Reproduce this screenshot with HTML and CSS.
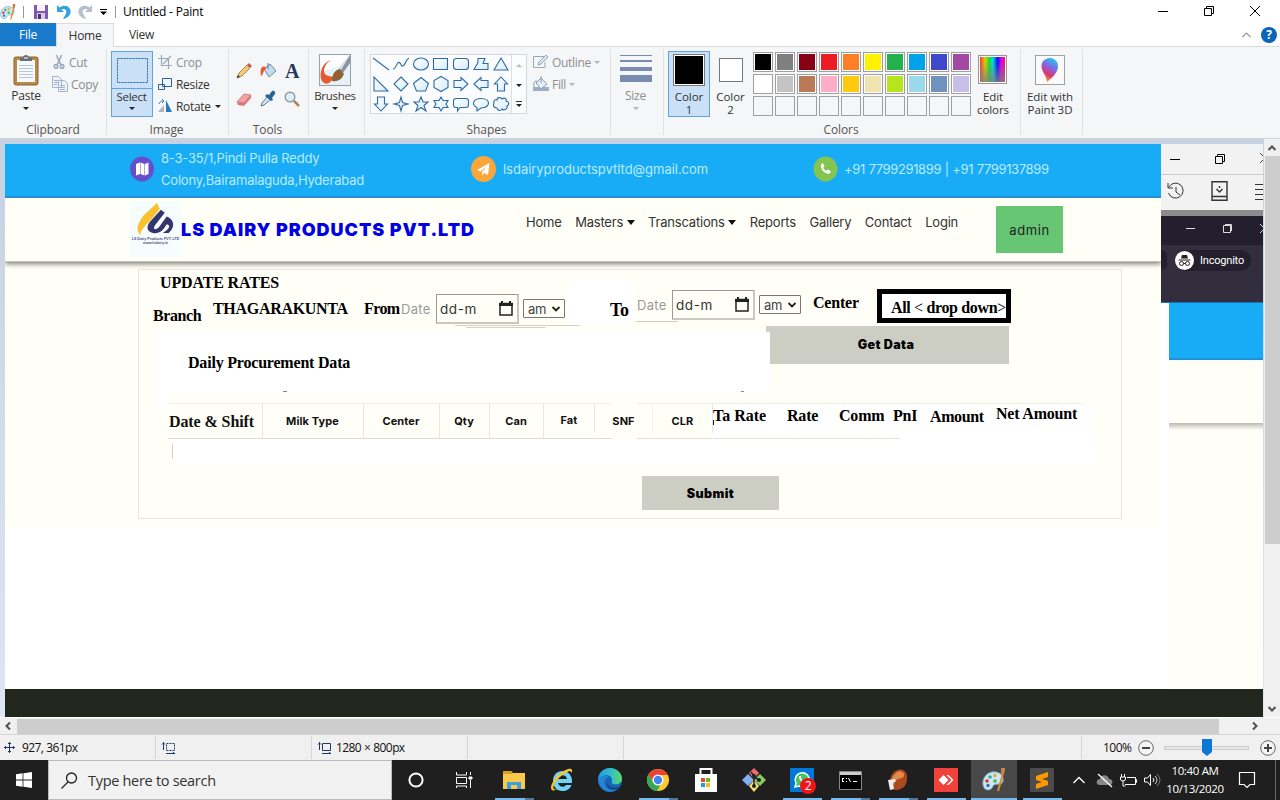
FILE: index.html
```html
<!DOCTYPE html>
<html lang="en">
<head>
<meta charset="utf-8">
<title>Untitled - Paint</title>
<link rel="stylesheet" href="styles.css">
</head>
<body>
<svg width="0" height="0" class="defs">
  <defs>
    <linearGradient id="sky" x1="0" y1="0" x2="1" y2="1"><stop offset="0" stop-color="#fff"/><stop offset="1" stop-color="#d5ecfa"/></linearGradient>
    <linearGradient id="rainbow"><stop offset="0" stop-color="#f33"/><stop offset=".2" stop-color="#dc0"/><stop offset=".38" stop-color="#1d3"/><stop offset=".52" stop-color="#0dd"/><stop offset=".7" stop-color="#11f"/><stop offset=".87" stop-color="#e0e"/><stop offset="1" stop-color="#f14"/></linearGradient>
    <linearGradient id="fade" x1="0" y1="0" x2="0" y2="1"><stop offset=".2" stop-color="#808080" stop-opacity="0"/><stop offset="1" stop-color="#808080" stop-opacity=".8"/></linearGradient>
    <linearGradient id="pin" x1=".7" y1="0" x2=".3" y2="1"><stop offset="0" stop-color="#1dc8ee"/><stop offset=".4" stop-color="#8a62e4"/><stop offset=".7" stop-color="#e0366e"/><stop offset="1" stop-color="#f7a51c"/></linearGradient>
    <linearGradient id="edge" x1="0" y1="0" x2="1" y2="0"><stop offset="0" stop-color="#1d9fe0"/><stop offset=".6" stop-color="#35c1c4"/><stop offset="1" stop-color="#5ddb55"/></linearGradient>
    <symbol id="palette" viewBox="0 0 24 24">
      <path d="M10 4C4 5 0 11 1 17c1 5 5 6 8 4 2-1 1-3 3-4 3-2 8 1 9-4C22 7 17 3 10 4z" fill="#cde7f4" stroke="#7aa7c0"/>
      <circle cx="5" cy="13" r="1.8" fill="#d33"/><circle cx="8" cy="9" r="1.8" fill="#3a9"/><circle cx="13" cy="7.500" r="1.800" fill="#ea3"/><circle cx="6" cy="17.500" r="1.700" fill="#36c"/><circle cx="13" cy="13" r="1.800" fill="#4b4"/>
      <path d="M22 1l-2 8-4 14" stroke="#dd8a35" stroke-width="2" fill="none"/><path d="M19 0h4l-1 6h-3z" fill="#c98247"/>
    </symbol>
  </defs>
</svg>

<header class="titlebar">
  <svg class="app-icon" width="16" height="16"><use href="#palette"/></svg>
  <i class="bar"></i>
  <svg class="q-save" width="14" height="14" viewBox="0 0 14 14"><path d="M0 0h14v14H0z" fill="#8059ad"/><path d="M3 0h8v6H3z" fill="#f6f2fb"/><path d="M3 8h8v6H3z" fill="#d9c8ea"/><path d="M4 9h3v5H4z" fill="#4a3575"/></svg>
  <svg class="q-undo" width="14" height="14" viewBox="0 0 14 14"><path d="M0 0v7h7L4.500 4.500C8 3 11 6 8.500 9.500L6 14c6-1 9-6 7-10-2-4-7-4-10.500-1.500z" fill="#32a3dd"/></svg>
  <svg class="q-redo" width="14" height="14" viewBox="0 0 14 14"><path d="M14 0v7H7l2.500-2.500C6 3 3 6 5.500 9.500L8 14C2 13-1 8 1 4c2-4 7-4 10.500-1.500z" fill="#b8bfca"/></svg>
  <svg class="q-more" width="7" height="6" viewBox="0 0 7 6"><path d="M0 0h7v1H0zM0 2.500h7L3.500 6z"/></svg>
  <i class="bar bar2"></i>
  <span class="title">Untitled - Paint</span>
  <div class="win-buttons">
    <svg width="10" height="12" viewBox="0 0 10 12"><path d="M0 6.500h10" stroke="#000"/></svg>
    <svg width="10" height="12" viewBox="0 0 10 12" fill="none" stroke="#000"><path d="M.5 3.500h7v7h-7zM2.500 3.500v-2h7v7h-2"/></svg>
    <svg width="10" height="12" viewBox="0 0 10 12" stroke="#000"><path d="M0 1l10 10M10 1L0 11"/></svg>
  </div>
</header>

<nav class="tabs">
  <span class="tab file">File</span><span class="tab home">Home</span><span class="tab view">View</span>
  <svg class="collapse" width="9" height="6" viewBox="0 0 9 6"><path d="M.5 5l4-4 4 4" fill="none" stroke="#9a9a9a" stroke-width="1.200"/></svg>
  <span class="help">?</span>
</nav>

<section class="ribbon">
  <div class="group g-clip">
    <div class="content">
      <div class="big paste"><div class="pic"><svg width="26" height="32" viewBox="0 0 26 32"><rect x="1" y="3" width="24" height="28" rx="2" fill="#b98947" stroke="#8c6430"/><path d="M4 6h18v22H4z" fill="#f7fafd"/><path d="M6 11.500h14M6 14.500h14M6 17.500h14M6 20.500h14M6 23.500h14" stroke="#b4c7dc"/><path d="M7 7V4h3c0-4 6-4 6 0h3v3z" fill="#666e77"/><path d="M11 4h4" stroke="#fff"/></svg></div><span>Paste</span><i class="dn"></i></div>
      <div class="minis">
        <div class="mini off"><svg width="14" height="16" viewBox="0 0 16 18" fill="none" stroke="#9ba9bd" stroke-width="1.800"><path d="M5 1l5 11M11 1L6 12"/><circle cx="4.500" cy="14" r="2"/><circle cx="11.500" cy="14" r="2"/></svg><span>Cut</span></div>
        <div class="mini off"><svg width="16" height="16" viewBox="0 0 16 16" fill="#eef2f8" stroke="#a4b4cc"><path d="M.5.500h6l3 3v8h-9zM2 4.500h4M2 6.500h4M2 8.500h3M6.500 4.500h6l3 3v8h-9zM8 9.500h5M8 11.500h5M8 13.500h5"/></svg><span>Copy</span></div>
      </div>
    </div><div class="label">Clipboard</div>
  </div>
  <div class="group g-image">
    <div class="content">
      <div class="big on select"><div class="pic"><svg width="31" height="25" viewBox="0 0 31 25"><rect x=".5" y=".5" width="30" height="24" fill="none" stroke="#26659f" stroke-dasharray="2 1"/></svg></div><span>Select</span><i class="dn"></i></div>
      <div class="minis">
        <div class="mini off"><svg width="14" height="14" viewBox="0 0 14 14" fill="none" stroke="#9ba8ba"><path d="M3.500 0v10.500H14M0 3.500h10.500V14M5 9l8-8" stroke-width="1.200"/></svg><span>Crop</span></div>
        <div class="mini"><svg width="14" height="14" viewBox="0 0 14 14" fill="#eef6ff" stroke="#315f91"><path d="M4.500 1.500h9v8h-9zM.5 7.500h6v5h-6z"/></svg><span>Resize</span></div>
        <div class="mini"><svg width="14" height="14" viewBox="0 0 14 14"><path d="M0 13h6V6z" fill="#aeb5bd"/><path d="M8 1v12h6z" fill="#2b7bb9"/><path d="M1 5c1-3 3-3 5-3M4 0l2 2-2 2" stroke="#3682bb" fill="none"/></svg><span>Rotate</span><i class="dn"></i></div>
      </div>
    </div><div class="label">Image</div>
  </div>
  <div class="group g-tools">
    <div class="content tools">
      <svg viewBox="0 0 16 16"><path d="M1 15l2-5 8-8 3 3-8 8z" fill="#f1cd6d" stroke="#8e744a" stroke-width=".8"/><path d="M11 2l2-2 3 3-2 2z" fill="#cd5b54"/><path d="M1 15l1-3 2 2z" fill="#333"/></svg>
      <svg viewBox="0 0 16 16"><path d="M4 6l6-5 6 7-7 6z" fill="#c4dced" stroke="#6d8ba8"/><path d="M8 6V0" stroke="#6b7787"/><path d="M6 4C1 2 0 6 1 13c2 0 2-6 5-7z" fill="#ea5a2e"/></svg>
      <b class="letter">A</b>
      <svg viewBox="0 0 16 16"><path d="M1 11L8 3l7 1-7 8z" fill="#f3a3a1" stroke="#bd6666" stroke-width=".7"/><path d="M1 11l7 1v3l-6-1zM8 12l7-8v3l-7 8z" fill="#da7676"/></svg>
      <svg viewBox="0 0 16 16"><path d="M1 15l1-3 6-7 3 3-7 6z" fill="#d5e7f4" stroke="#55789a"/><path d="M7 3l2 1 3-4c2-1 4 1 3 3l-3 4 1 2-2 1-6-5z" fill="#28649a"/></svg>
      <svg viewBox="0 0 16 16"><circle cx="6" cy="6" r="4.800" fill="#dceefa" stroke="#8d9ba9" stroke-width="1.400"/><path d="M10 10l5 5" stroke="#b0835b" stroke-width="2.500"/></svg>
    </div><div class="label">Tools</div>
  </div>
  <div class="group g-brush">
    <div class="content"><div class="big brushes"><div class="pic"><svg width="32" height="32" viewBox="0 0 32 32"><rect x=".5" y=".5" width="31" height="31" fill="#e6f2f9" stroke="#98a0a8"/><path d="M1 1h30L20 12 2 18z" fill="#fff"/><path d="M12 6C8 8 5 13 5 17c0 4 4 5 9 6-1 5-5 8-9 6C-1 25 1 9 12 6z" fill="#e75a2d"/><path d="M31 1L20 15l4 4 7-10z" fill="#8a93a3"/><path d="M31 1L20 15l2 1z" fill="#dfe4eb"/><path d="M13 27c0-7 3-11 8-12l4 5c-2 5-6 8-12 7z" fill="#916033"/></svg></div><span>Brushes</span><i class="dn"></i></div></div>
  </div>
  <div class="group g-shapes">
    <div class="content">
      <div class="gallery">
        <div class="shapes">
          <svg viewBox="0 0 16 16"><path d="M0 2l16 12"/></svg>
          <svg viewBox="0 0 16 16"><path fill="none" d="M0 13c3 1 4-9 7-6 2 2 1 5 4 2 2-2 2-6 5-7"/></svg>
          <svg viewBox="0 0 16 16"><ellipse cx="8" cy="8" rx="7.500" ry="6"/></svg>
          <svg viewBox="0 0 16 16"><path d="M.5 2.500h14v11H.5z"/></svg>
          <svg viewBox="0 0 16 16"><rect x=".5" y="2.500" width="15" height="11" rx="3"/></svg>
          <svg viewBox="0 0 16 16"><path d="M5 2.500h7l-2 5h5v6H1l4-7z"/></svg>
          <svg viewBox="0 0 16 16"><path d="M8 2l7 12H1z"/></svg>
          <svg viewBox="0 0 16 16"><path d="M1 1v14h14z"/></svg>
          <svg viewBox="0 0 16 16"><path d="M8 1l7 7-7 7-7-7z"/></svg>
          <svg viewBox="0 0 16 16"><path d="M8 1.500l7.500 6-3 7.500h-9l-3-7.500z"/></svg>
          <svg viewBox="0 0 16 16"><path d="M8 .5l7 4v7l-7 4-7-4v-7z"/></svg>
          <svg viewBox="0 0 16 16"><path d="M1 4.500h7V1.500L15 8l-7 6.500v-3H1z"/></svg>
          <svg viewBox="0 0 16 16"><path d="M15 4.500H8V1.500L1 8l7 6.500v-3h7z"/></svg>
          <svg viewBox="0 0 16 16"><path d="M4.500 15V8H1.500L8 1l6.500 7h-3v7z"/></svg>
          <svg viewBox="0 0 16 16"><path d="M4.500 1v7H1.500L8 15l6.500-7h-3V1z"/></svg>
          <svg viewBox="0 0 16 16"><path d="M8 1l1.500 5.500L15 8l-5.500 1.500L8 15l-1.500-5.500L1 8l5.500-1.500z"/></svg>
          <svg viewBox="0 0 16 16"><path d="M8 1l2 5h5l-4 3.500 2 5.500-5-3.500L3 15l2-5.500L1 6h5z"/></svg>
          <svg viewBox="0 0 16 16"><path d="M8 1l2 3.500h5L13 8l2 3.500h-5L8 15l-2-3.500H1L3 8 1 4.500h5z"/></svg>
          <svg viewBox="0 0 16 16"><path d="M3 2.500h10q2.500 0 2.500 2.500v4q0 2.500-2.500 2.500H7L4.500 15v-3.500H3Q.5 11.500.5 9V5Q.5 2.500 3 2.500z"/></svg>
          <svg viewBox="0 0 16 16"><path d="M4 11.500C-2 9 0 2.500 8 2.500c10 0 10 9 0 9.500l-4 3z"/></svg>
          <svg viewBox="0 0 16 16"><path d="M4 4c0-3 4-3 5-1 3-2 5 0 4 2 4 1 3 4 1 5 1 3-3 5-5 3-2 3-5 1-5-1-4 0-4-3-3-5-1-2 1-4 3-3z"/></svg>
        </div>
        <div class="gscroll"><i class="up"></i><i class="dn"></i><i class="dn over"></i></div>
      </div>
      <div class="minis">
        <div class="mini off"><svg width="16" height="16" viewBox="0 0 16 16" fill="none" stroke="#98a6b8"><path d="M11 2.500H.5v11H12V8"/><path d="M5 11l1-3 7-7 2 2-7 7z" fill="#dde3ec"/></svg><span>Outline</span><i class="dn"></i></div>
        <div class="mini off"><svg width="16" height="16" viewBox="0 0 16 16"><path d="M0 11h16v4H0z" fill="#9daecb"/><path d="M3 7l5-5 6 6-6 5z" fill="#e5ebf4" stroke="#8a9ab4"/><path d="M8 7V0M4 5c-4 0-3 3-3 6" stroke="#8a9ab4" fill="none"/></svg><span>Fill</span><i class="dn"></i></div>
      </div>
    </div><div class="label">Shapes</div>
  </div>
  <div class="group g-size">
    <div class="content"><div class="big off"><div class="pic sizes"><i></i><i></i><i></i><i></i></div><span>Size</span><i class="dn"></i></div></div>
  </div>
  <div class="group g-colors">
    <div class="content">
      <div class="big on color"><div class="pic"><i class="sw black"></i></div><span>Color<br>1</span></div>
      <div class="big color c2"><div class="pic"><i class="sw white"></i></div><span>Color<br>2</span></div>
      <div class="colors">
        <i class="k1"></i><i class="k2"></i><i class="k3"></i><i class="k4"></i><i class="k5"></i><i class="k6"></i><i class="k7"></i><i class="k8"></i><i class="k9"></i><i class="k10"></i>
        <i class="k11"></i><i class="k12"></i><i class="k13"></i><i class="k14"></i><i class="k15"></i><i class="k16"></i><i class="k17"></i><i class="k18"></i><i class="k19"></i><i class="k20"></i>
        <i></i><i></i><i></i><i></i><i></i><i></i><i></i><i></i><i></i><i></i>
      </div>
      <div class="big color edit"><div class="pic"><svg width="30" height="30" viewBox="0 0 30 30"><rect x=".5" y=".5" width="28" height="28" fill="#fff" stroke="#969696"/><path d="M2 2h25v25H2z" fill="url(#rainbow)"/><path d="M2 2h25v25H2z" fill="url(#fade)"/></svg></div><span>Edit<br>colors</span></div>
    </div><div class="label">Colors</div>
  </div>
  <div class="group g-3d">
    <div class="content"><div class="big color p3d"><div class="pic"><svg width="30" height="30" viewBox="0 0 30 30"><rect x=".5" y=".5" width="29" height="29" fill="#fafafa" stroke="#a0a0a0"/><path d="M15 3c-6 0-10 5-8 11 1 4 4 6 5 13 7-6 11-10 11-16 0-5-4-8-8-8z" fill="url(#pin)"/></svg></div><span>Edit with<br>Paint 3D</span></div></div>
  </div>
</section>

<main class="work">
  <div class="canvas">
    <div class="site">
      <div class="topbar">
        <svg width="24" height="26" viewBox="0 0 24 26"><ellipse cx="12" cy="13" rx="12" ry="12.500" fill="#654fca"/><path d="M6 8l4-1.500V18L6 19.500zM10.500 6.500l4 1.500v11.500l-4-1.500zM15 8l3.500-1.500V18L15 19.500z" fill="#fff"/></svg>
        <div class="addr">8-3-35/1,Pindi Pulla Reddy<br>Colony,Bairamalaguda,Hyderabad</div>
        <svg width="25" height="26" viewBox="0 0 25 26"><ellipse cx="12.500" cy="13" rx="12.500" ry="13" fill="#fba63c"/><path d="M6 14L18.500 7 17 19l-4-2-2 2.500V16l5-6-6.500 5.500z" fill="#fff"/></svg>
        <div class="mail">lsdairyproductspvtltd@gmail.com</div>
        <svg width="25" height="26" viewBox="0 0 25 26"><ellipse cx="12.500" cy="13" rx="12" ry="12.500" fill="#84c552"/><path d="M8 8l2-.7 1.500 3-1.300 1.500c.7 1.500 1.600 2.400 3 3l1.500-1.200 3 1.500-.7 2.400C12 18.500 7 13.500 8 8z" fill="#fff"/></svg>
        <div class="phone">+91 7799291899 | +91 7799137899</div>
      </div>
      <div class="navbar">
        <div class="logo">
          <svg width="51" height="35" viewBox="0 0 51 36"><path d="M10 34C4 28 8 20 14 13L27 1l3 6-9 11c-7 8-10 9-11 16z" fill="#fbc22d"/><path d="M31 8l4 3-10 13c-3 5 1 5 4 2l8-11c8 3 9 11 2 17h-6c8-5 8-8 4-9-4 7-8 10-14 9-7-2-7-7-3-12z" fill="#343470"/></svg>
          <small>LS Dairy Products PVT. LTD<br>www.lsdairy.in</small>
        </div>
        <div class="brand">LS DAIRY PRODUCTS PVT.LTD</div>
        <ul class="menu"><li>Home</li><li>Masters <i></i></li><li>Transcations <i></i></li><li>Reports</li><li>Gallery</li><li>Contact</li><li>Login</li></ul>
        <div class="admin">admin</div>
      </div>
      <div class="page">
        <div class="panel">
          <div class="patch pa"></div><div class="patch pb"></div><div class="patch pc"></div><div class="patch pd"></div><div class="patch pe"></div>
          <i class="stroke s1"></i><i class="stroke s2"></i><i class="stroke s3"></i><i class="stroke s4"></i><i class="stroke s5"></i><i class="stroke s6"></i><i class="stroke s7"></i><i class="stroke s8"></i>
          <h2>UPDATE RATES</h2>
          <div class="filters">
            <b class="branch">Branch</b><b class="village">THAGARAKUNTA</b><b class="from">From</b>
            <span class="dlabel">Date</span>
            <span class="dinput">dd-m<svg width="14" height="15" viewBox="0 0 14 15"><path d="M1 2.500h12v11.500H1z" fill="none" stroke="#222" stroke-width="1.500"/><path d="M0 2h14v3H0zM2 0h2v2H2zM10 0h2v2h-2z" fill="#222"/></svg></span>
            <span class="sel">am<svg width="8" height="6" viewBox="0 0 8 6"><path d="M.5 1L4 4.500 7.500 1" fill="none" stroke="#222" stroke-width="1.800"/></svg></span>
            <b class="to">To</b>
            <span class="dlabel hi">Date</span>
            <span class="dinput hi">dd-m<svg width="14" height="15" viewBox="0 0 14 15"><path d="M1 2.500h12v11.500H1z" fill="none" stroke="#222" stroke-width="1.500"/><path d="M0 2h14v3H0zM2 0h2v2H2zM10 0h2v2h-2z" fill="#222"/></svg></span>
            <span class="sel hi">am<svg width="8" height="6" viewBox="0 0 8 6"><path d="M.5 1L4 4.500 7.500 1" fill="none" stroke="#222" stroke-width="1.800"/></svg></span>
            <b class="center">Center</b>
            <b class="drop">All <span>&lt;</span> drop down<span>&gt;</span></b>
          </div>
          <div class="getrow"><h3>Daily Procurement Data</h3><div class="btn get">Get Data</div></div>
          <div class="thead">
            <div class="cell serif first">Date &amp; Shift</div><div class="cell">Milk Type</div><div class="cell">Center</div><div class="cell">Qty</div><div class="cell">Can</div><div class="cell short">Fat</div><div class="cell snf">SNF</div><div class="cell clr">CLR</div>
            <div class="plain">Ta Rate</div><div class="plain">Rate</div><div class="plain">Comm</div><div class="plain">PnI</div><div class="plain low">Amount</div><div class="plain high">Net Amount</div>
          </div>
          <div class="btn submit">Submit</div>
        </div>
      </div>
    </div>
    <aside class="behind">
      <div class="wtop"><svg width="10" height="11" viewBox="0 0 10 11"><path d="M0 6.500h10" stroke="#000"/></svg><svg width="10" height="11" viewBox="0 0 10 11" fill="none" stroke="#000"><path d="M.5 3.500h7v7h-7zM2.500 3.500v-2h7v7h-2"/></svg><svg width="10" height="11" viewBox="0 0 10 11" stroke="#444"><path d="M0 0l10 10M10 0L0 10"/></svg></div>
      <div class="wtools"><svg width="17" height="18" viewBox="0 0 17 18" fill="none" stroke="#333"><path d="M2 5a7.500 7.500 0 1 1-.5 6M1 1v5h5M9 5v5l4 3"/></svg><svg width="17" height="20" viewBox="0 0 17 20" fill="none" stroke="#333" stroke-width="1.400"><path d="M1 .7h15v18.500H1zM1 15.500h15M5.500 8l3 3 3-3M8.500 5v2"/></svg><svg width="17" height="17" viewBox="0 0 17 17" stroke="#333"><path d="M0 1.500h17M0 6.500h17M0 11.500h17M0 16.500h17"/></svg></div>
      <div class="gray"></div>
      <div class="dark1"><svg width="9" height="9" viewBox="0 0 9 9"><path d="M0 4.500h9" stroke="#ddd"/></svg><svg width="9" height="9" viewBox="0 0 9 9" fill="none" stroke="#ddd"><path d="M.5 1.500h7v7h-7zM2 .5h6.500V7"/></svg><svg width="9" height="9" viewBox="0 0 9 9" stroke="#ddd"><path d="M0 0l9 9M9 0L0 9"/></svg></div>
      <div class="dark2"><i class="pill0"></i><span class="incog"><svg width="19" height="19" viewBox="0 0 19 19"><circle cx="9.500" cy="9.500" r="9.500" fill="#fff"/><path d="M6 7.500L7 4h5l1 3.500zM3.500 8.500h12v1h-12z" fill="#222"/><circle cx="6.500" cy="12.500" r="2" fill="none" stroke="#222"/><circle cx="12.500" cy="12.500" r="2" fill="none" stroke="#222"/><path d="M8.500 12.500h2" stroke="#222"/></svg>Incognito</span></div>
      <div class="second"><div class="b1"></div><div class="b2"></div><div class="b3"></div></div>
    </aside>
    <div class="footer"></div>
  </div>
  <div class="vscroll"><svg width="8" height="6" viewBox="0 0 8 6"><path d="M.5 5L4 1.500 7.500 5" fill="none" stroke="#505050" stroke-width="2"/></svg><i></i><svg class="end" width="8" height="6" viewBox="0 0 8 6"><path d="M.5 1L4 4.500 7.500 1" fill="none" stroke="#505050" stroke-width="2"/></svg></div>
</main>
<div class="hscroll"><svg width="6" height="8" viewBox="0 0 6 8"><path d="M5 .5L1.500 4 5 7.500" fill="none" stroke="#505050" stroke-width="2"/></svg><i></i><svg class="end" width="6" height="8" viewBox="0 0 6 8"><path d="M1 .5L4.500 4 1 7.500" fill="none" stroke="#505050" stroke-width="2"/></svg></div>

<footer class="status">
  <div class="st a"><svg width="11" height="11" viewBox="0 0 11 11" stroke="#1f3b63" fill="none"><path d="M0 5.500h11M5.500 0v11M4 1.500h3M4 9.500h3M1.500 4v3M9.500 4v3"/></svg>927, 361px</div>
  <div class="st b"><svg width="13" height="12" viewBox="0 0 13 12" stroke="#1f3b63" fill="none"><path d="M1.500 0v8M0 2.500L1.500 1 3 2.500M4 11.500h9M11 10l1.500 1.500"/><path d="M4.500 1.500h8v7h-8z" stroke-dasharray="2 1"/></svg></div>
  <div class="st b"><svg width="13" height="12" viewBox="0 0 13 12" stroke="#1f3b63" fill="none"><path d="M1.500 0v8M0 2.500L1.500 1 3 2.500M4 11.500h9M11 10l1.500 1.500M4.500 1.500h8v7h-8z"/></svg>1280 × 800px</div>
  <div class="st b"></div>
  <div class="st c"></div>
  <div class="zoom"><span>100%</span>
    <svg width="16" height="16" viewBox="0 0 16 16"><circle cx="8" cy="8" r="7.300" fill="#f5f5f5" stroke="#666"/><path d="M4 8h8" stroke="#444" stroke-width="2"/></svg>
    <div class="track"><svg width="10" height="17" viewBox="0 0 10 17"><path d="M0 0h10v13l-5 4-5-4z" fill="#0c78d4"/></svg></div>
    <svg width="16" height="16" viewBox="0 0 16 16"><circle cx="8" cy="8" r="7.300" fill="#f5f5f5" stroke="#666"/><path d="M4 8h8M8 4v8" stroke="#444" stroke-width="2"/></svg>
  </div>
</footer>

<div class="taskbar">
  <div class="start"><svg width="16" height="16" viewBox="0 0 16 16" fill="#fff"><path d="M0 2.300L6.600 1.300V7.600H0zM7.400 1.200L16 0v7.600H7.400zM0 8.400h6.600v6.300L0 13.700zM7.400 8.400H16V16l-8.600-1.200z"/></svg></div>
  <div class="search"><svg width="17" height="17" viewBox="0 0 17 17" fill="none" stroke="#222" stroke-width="1.300"><circle cx="10.500" cy="6" r="5"/><path d="M7 10l-6.500 6.500"/></svg>Type here to search</div>
  <div class="task"><svg width="16" height="16" viewBox="0 0 16 16"><circle cx="8" cy="8" r="6.600" fill="none" stroke="#fff" stroke-width="2"/></svg></div>
  <div class="task view-task"><svg width="16" height="16" viewBox="0 0 16 16" fill="none" stroke="#fff"><path d="M.5 0v3h10V0M.5 5.500h10v6H.5zM.5 16v-2h10v2M14.500 0v3M14.500 8v8"/><path d="M13 5h3v2h-3z" fill="#fff"/></svg></div>
  <div class="task run multi"><svg width="22" height="18" viewBox="0 0 22 18"><path d="M0 0h8l2 2h12v16H0z" fill="#f9c84c"/><path d="M0 0h8l2 3H0z" fill="#d99e23"/><path d="M4 18v-7h14v7h-4v-4H8v4z" fill="#3aa0de"/></svg></div>
  <div class="task"><svg width="24" height="24" viewBox="0 0 24 24"><path d="M3 13C3 7 7 3 12.500 3S22 7 22 13v2H8c1 4 6 5 8 2h5.500c-1.500 4-5 6-9 6C7 23 3 19 3 13zM8 11h9c-.5-5-8.500-5-9 0z" fill="#6fd3f7"/><path d="M2 22C-1 20 3 12 8 7 14 2 21-1 22 2c.3 1 0 2-.7 3 0-4-6-1-11.300 4-5 5-8 10-6 12 1 1 3 .5 5-1-3 2.500-6 3-7 2z" fill="#f7c331"/></svg></div>
  <div class="task"><svg width="24" height="24" viewBox="0 0 24 24"><circle cx="12" cy="12" r="12" fill="#1765b5"/><path d="M0 11C1 4 6 0 12 0c7 0 12 5 12 11 0 4-4 6-9 5-2-1-1-2-1-4 0-4-5-6-9-4-2 1-4 2-5 3z" fill="url(#edge)"/><path d="M0 11c3-4 9-4 11-2-5 1-6 7-2 11 3 3 7 3 12 0-5 5-13 5-17 0-3-3-4-6-4-9z" fill="#2585d2"/><path d="M9 14c0 4 5 7 12 5l-1 2c-8 2-12-3-11-7z" fill="#0d3f78"/></svg></div>
  <div class="task run multi"><svg width="24" height="24" viewBox="0 0 24 24"><circle cx="12" cy="12" r="11" fill="#fbc934"/><path d="M2 7a11.500 11.500 0 0 1 20 0H12l-4 7z" fill="#e84336"/><path d="M2.500 6.500A11 11 0 0 0 11 23l5-9H7z" fill="#34a853"/><circle cx="12" cy="12" r="5.500" fill="#fff"/><circle cx="12" cy="12" r="4.200" fill="#4285f4"/></svg></div>
  <div class="task"><svg width="24" height="24" viewBox="0 0 24 24"><path d="M1 6h22v18H1z" fill="#fff"/><path d="M6.500 7V1h11v6" fill="none" stroke="#fff" stroke-width="2"/><path d="M7 10h4v4H7z" fill="#e74a28"/><path d="M12 10h4v4h-4z" fill="#7ab51d"/><path d="M7 15h4v4H7z" fill="#1b9fe4"/><path d="M12 15h4v4h-4z" fill="#fab719"/></svg></div>
  <div class="task"><svg width="24" height="24" viewBox="0 0 24 24"><path d="M12 0l5 5-5 6-5-6z" fill="#f06c6c"/><path d="M6 6l6 6-6 6-6-6z" fill="#82aef3"/><path d="M18 6l6 6-6 6-6-6z" fill="#86cc67"/><path d="M12 12l5 6-5 6-5-6z" fill="#f9df6d"/><path d="M9 4l3 4v11M12 9l5 3" stroke="#222" stroke-width="1.500" fill="none"/><circle cx="12" cy="8" r="2" fill="#222"/><circle cx="12" cy="18" r="2" fill="#222"/><circle cx="17" cy="12" r="2" fill="#222"/></svg></div>
  <div class="task run"><svg width="24" height="24" viewBox="0 0 24 24"><path d="M0 0h24v24H0z" fill="#0078d7"/><path d="M5 19l1-4a7 7 0 1 1 3 3z" fill="#42c85a" stroke="#fff" stroke-width="1.500"/><path d="M9 8c0 4 2 6 6 7l1-2-2-1-1 1-2-3v-2z" fill="#fff"/></svg><span class="badge">2</span></div>
  <div class="task run multi"><svg width="23" height="19" viewBox="0 0 23 19"><path d="M.5.500h22v18H.5z" fill="#000" stroke="#888"/><path d="M1 1h21v3H1z" fill="#ccc"/><path d="M3 7h2v1H4v2h1v1H3zM7 7h1v1H7zM7 10h1v1H7zM9 7h1l2 4h-1zM14 10h4v1h-4z" fill="#fff"/></svg></div>
  <div class="task run multi"><svg width="22" height="22" viewBox="0 0 22 22"><path d="M11 1c6-2 10 3 9 9 0 7-5 11-11 11-5 0-7-4-6-8 0-6 3-11 8-12z" fill="#a9491c"/><path d="M10 3c4-2 8 1 7 4-2 4-7 1-9 6-1 3-3 4-4 2 0-5 2-9 6-12z" fill="#e28a4e"/><path d="M1 11l7-1 1 2-3 2 1 6-4 1-1-5z" fill="#eee"/></svg></div>
  <div class="task run"><svg width="24" height="24" viewBox="0 0 24 24"><path d="M0 0h24v24H0z" fill="#f0413a"/><path d="M9.500 7l5 5-5 5-5-5zM12.500 7h2l5 5-5 5h-2l5-5z" fill="#fff"/></svg></div>
  <div class="task run active"><svg width="24" height="24"><use href="#palette"/></svg></div>
  <div class="task run sub"><svg width="24" height="24" viewBox="0 0 24 24"><rect width="24" height="24" rx="1" fill="#4b4b4b"/><path d="M6 8l12-4v5l-6 2 6 2v4L6 21v-5l6-2-6-2z" fill="#ff9800"/></svg></div>
  <div class="tray">
    <svg width="12" height="8" viewBox="0 0 12 8"><path d="M.5 7L6 1.500 11.500 7" fill="none" stroke="#fff" stroke-width="1.300"/></svg>
    <svg width="17" height="14" viewBox="0 0 17 14"><path d="M4 12c-5 0-4-6 0-6 1-5 8-5 9 0 5 0 4 6 1 6z" fill="#888"/><path d="M2 1l14 13" stroke="#fff" stroke-width="1.300"/></svg>
    <svg width="17" height="13" viewBox="0 0 17 13" fill="none" stroke="#fff"><path d="M7 3.500h8.500v7H5M15.500 5.500h1v3h-1M1.500 0v3M4.500 0v3M.5 3h5v2q0 2-2.500 2T.5 5zM3 7v5h2.500"/></svg>
    <svg width="17" height="14" viewBox="0 0 17 14" fill="none" stroke="#fff"><path d="M.5 5h3l3-3.500v11L3.500 9h-3zM9 5q2 2 0 4"/><path d="M11 3q4 4 0 8" stroke="#ccc"/><path d="M13 1q6 6 0 12" stroke="#777"/></svg>
  </div>
  <div class="clock">10:40 AM<br>10/13/2020</div>
  <svg class="notif" width="16" height="17" viewBox="0 0 16 17"><path d="M.5.500h15v12H11L8 15.500 5 12.500H.5z" fill="none" stroke="#fff" stroke-width="1.200"/></svg>
  <i class="desk"></i>
</div>
</body>
</html>
```
FILE: styles.css
```css
* { box-sizing: border-box; }
body { margin: 0; width: 1280px; height: 800px; overflow: hidden; display: flex; flex-direction: column; background: #fff; font-family: "Open Sans", sans-serif; font-size: 12px; letter-spacing: -0.25px; color: #333; }
svg { display: block; flex: none; overflow: visible; }
.defs { position: absolute; }
i { display: block; flex: none; }
.dn { width: 0; height: 0; border: 3px solid transparent; border-top-color: #222; border-bottom: 0; }

/* title bar */
.titlebar { height: 23px; flex: none; display: flex; align-items: center; }
.bar { width: 1px; height: 12px; background: #999; margin-left: 7px; }
.q-save { margin-left: 10px; }
.q-undo { margin-left: 9px; }
.q-redo { margin-left: 7px; }
.q-more { margin-left: 8px; }
.bar2 { margin-left: 8px; }
.title { margin-left: 7px; color: #000; letter-spacing: -0.2px; }
.win-buttons { margin-left: auto; margin-right: 20px; margin-bottom: 2px; display: flex; gap: 36px; }

/* tabs */
.tabs { height: 24px; flex: none; display: flex; align-items: center; border-bottom: 1px solid #dadbdc; }
.tab { height: 23px; line-height: 24px; text-align: center; }
.file { width: 56px; background: #1979ca; color: #fff; }
.home { width: 58px; height: 24px; background: #f5f6f7; border: 1px solid #dadbdc; border-bottom: 0; margin-bottom: -1px; }
.view { width: 55px; }
.collapse { margin-left: auto; margin-right: 10px; }
.help { width: 16px; height: 16px; margin-right: 3px; border-radius: 50%; background: #0c64b6; color: #fff; font-weight: 700; line-height: 16px; text-align: center; }

/* ribbon */
.ribbon { height: 92px; flex: none; display: flex; background: #f5f6f7; border-bottom: 1px solid #cfd4dc; }
.group { position: relative; height: 91px; padding-top: 4px; display: flex; flex-direction: column; flex: none; }
.group::after { content: ""; position: absolute; right: 0; top: 2px; bottom: 3px; width: 1px; background: #e0e1e3; }
.content { height: 70px; display: flex; align-items: flex-start; }
.label { height: 16px; line-height: 17px; padding-right: 3px; text-align: center; color: #555; letter-spacing: -0.1px; }
.g-clip { width: 107px; }
.g-clip .label { padding-right: 1px; }
.g-image { width: 122px; }
.g-tools { width: 80px; }
.g-brush { width: 56px; }
.g-shapes { width: 246px; }
.g-size { width: 53px; }
.g-colors { width: 357px; }
.g-3d { width: 62px; }
.big { width: 42px; height: 66px; display: flex; flex-direction: column; align-items: center; text-align: center; white-space: nowrap; }
.pic { height: 37px; width: 100%; display: flex; align-items: center; justify-content: center; }
.big > span { line-height: 16px; }
.big > .dn { margin-top: 3px; }
.brushes > span { font-size: 11.5px; letter-spacing: -0.3px; }
.on { background: #c9e0f7; border: 1px solid #62a2e4; }
.on .pic { height: 36px; }
.select .pic { height: 37px; border-bottom: 1px solid #62a2e4; }
.big.select > span { font-size: 11.5px; line-height: 15px; padding-right: 1px; }
.off { color: #8d8d8d; }
.off .dn, .minis .off .dn { border-top-color: #b5b5b5; }
.paste { margin-left: 5px; }
.select { margin-left: 4px; }
.minis { margin-left: 5px; }
.mini { height: 22px; display: flex; align-items: center; gap: 4px; letter-spacing: -0.3px; }
.g-clip .mini { gap: 3px; }
.g-shapes .minis { margin-left: 6px; }
.g-shapes .mini { gap: 3px; }
.tools { display: grid; grid-template-columns: repeat(3, 24px); grid-auto-rows: 28px; padding: 6px 0 0 3px; place-items: center; }
.tools svg { width: 16px; height: 16px; }
.letter { font: 700 20px/20px "Liberation Serif", serif; color: #22395f; }
.brushes { margin-left: 5px; }
.gallery { margin: 3px 0 0 5px; width: 157px; height: 60px; border: 1px solid #d5d8dc; background: #fbfcfd; display: flex; }
.shapes { display: grid; grid-template-columns: repeat(7, 20px); grid-auto-rows: 20px; width: 141px; height: 58px; place-items: center; margin: -1px 0 0 0; }
.shapes svg { width: 16px; height: 16px; fill: url(#sky); stroke: #2f6ba5; stroke-width: 1.1; }
.gscroll { width: 15px; border-left: 1px solid #dcdee1; display: flex; flex-direction: column; align-items: center; padding-top: 9px; }
.gscroll .dn { margin-top: 17px; }
.up { width: 0; height: 0; border: 3px solid transparent; border-bottom-color: #bbb; border-top: 0; }
.gscroll .over { position: relative; }
.over::before { content: ""; position: absolute; left: -3px; top: -6px; width: 6px; height: 1px; background: #333; }
.g-size .big { margin-left: 2px; width: 45px; }
.pic.sizes { flex-direction: column; justify-content: flex-start; padding-top: 4px; }
.sizes i { width: 32px; background: #7a8db0; height: 1px; margin-bottom: 4px; }
.sizes i:nth-child(2) { height: 2px; margin-bottom: 5px; }
.sizes i:nth-child(3) { height: 4px; }
.sizes i:nth-child(4) { height: 7px; }
.color > span { line-height: 13px; padding-top: 2px; font-size: 11.5px; letter-spacing: -0.05px; }
.g-colors .on { margin-left: 4px; }
.sw { width: 32px; height: 32px; border: 1px solid #777; box-shadow: inset 0 0 0 1px #fff; background: #000; }
.white { width: 24px; height: 24px; background: #fff; }
.colors { margin: 1px 0 0 2px; width: 220px; display: grid; grid-template-columns: repeat(10, 20px); grid-auto-rows: 20px; gap: 2px; }
.c2 { width: 41px; }
.colors i { border: 1px solid #a0a0a0; }
.colors i[class] { padding: 1px; background-clip: content-box; box-shadow: inset 0 0 0 1px #fff; }
.k1 { background-color: #000; } .k2 { background-color: #7f7f7f; } .k3 { background-color: #880015; } .k4 { background-color: #ed1c24; } .k5 { background-color: #ff7f27; }
.k6 { background-color: #fff200; } .k7 { background-color: #22b14c; } .k8 { background-color: #00a2e8; } .k9 { background-color: #3f48cc; } .k10 { background-color: #a349a4; }
.k11 { background-color: #fff; } .k12 { background-color: #c3c3c3; } .k13 { background-color: #b97a57; } .k14 { background-color: #ffaec9; } .k15 { background-color: #ffc90e; }
.k16 { background-color: #efe4b0; } .k17 { background-color: #b5e61d; } .k18 { background-color: #99d9ea; } .k19 { background-color: #7092be; } .k20 { background-color: #c8bfe7; }
.edit { width: 42px; margin-left: -1px; }
.p3d { width: 58px; }

/* work area */
.work { height: 578px; flex: none; display: flex; background: linear-gradient(#c8d1e1, #dce6f4); }
.canvas { margin: 5px 0 0 5px; width: 1258px; height: 573px; background: #fff; display: grid; grid-template-columns: 1156px 102px; grid-template-rows: 545px 28px; overflow: hidden; }
.site, .btn, .cell { font-family: "Inter", sans-serif; }
.topbar { height: 54px; background: #18acf7; border-bottom: 2px solid #1b93dc; display: grid; grid-template-columns: 24px 317px 25px 317px 25px 1fr; padding: 0 0 2px 125px; align-items: center; color: #b9ebff; font-size: 13px; line-height: 22px; }
.topbar > div { padding-left: 7px; white-space: nowrap; }
.topbar > .addr { letter-spacing: -0.2px; }
.mail { letter-spacing: -0.03px; }
.topbar > .phone { letter-spacing: -0.37px; word-spacing: 0.3px; padding-left: 6px; }
.navbar { position: relative; height: 64px; background: #fffff8; display: flex; padding-left: 125px; align-items: flex-start; box-shadow: 0 2px 5px #7d7f76; border-bottom: 1px solid #c3c5bb; }
.logo { width: 51px; height: 55px; margin-top: 4px; background: #f5fdff; }
.logo small { display: block; font: 700 3.6px/4px "Liberation Sans", sans-serif; letter-spacing: 0; color: #4d4d7e; text-align: center; white-space: nowrap; }
.brand { width: 295px; margin-top: 20px; font-size: 18px; line-height: 24px; font-weight: 900; color: #0000e6; white-space: nowrap; letter-spacing: 0.95px; }
.menu { margin: 14px 0 0 50px; padding: 0; list-style: none; display: flex; gap: 13.5px; font-size: 13px; line-height: 21px; letter-spacing: -0.2px; width: 470px; white-space: nowrap; }
.menu li { display: flex; align-items: center; gap: 3.5px; }
.menu i { border: 4px solid transparent; border-top: 5px solid #111; border-bottom: 0; }
.admin { width: 67px; height: 47px; margin-top: 8px; background: #66c673; line-height: 48px; text-align: center; font-size: 13px; letter-spacing: 0.6px; color: #222; }
.page { height: 265px; background: #fffff8; padding: 7px 0 0 133px; }
.panel { position: relative; width: 984px; height: 250px; border: 1px solid #e6e6de; }
.panel > h2, .panel > .filters, .panel > .getrow, .panel > .thead, .panel > .submit { position: relative; }
.panel h2, .panel h3, .panel b, .serif, .plain { font: 700 16px/18px "Liberation Serif", serif; color: #000; letter-spacing: -0.2px; margin: 0; white-space: nowrap; }
.panel h2 { padding: 4px 0 0 21px; height: 19px; letter-spacing: -0.15px; }
/* white brush-outs and leftover marks */
.patch { position: absolute; background: #fff; }
.pa { left: 17px; top: 61px; width: 614px; height: 60px; }
.pb { left: 17px; top: 121px; width: 13px; height: 20px; }
.pc { left: 34px; top: 170px; width: 922px; height: 23px; }
.pd { left: 571px; top: 134px; width: 383px; height: 37px; }
.pe { left: 428px; top: 10px; width: 68px; height: 45px; }
.stroke { position: absolute; height: 1px; background: #d0d1c8; }
.s1 { left: 316px; top: 55px; width: 125px; }
.s2 { left: 327px; top: 57px; width: 79px; }
.s3 { left: 497px; top: 51px; width: 42px; }
.s4 { left: 144px; top: 121px; width: 4px; background: #888; }
.s5 { left: 602px; top: 121px; width: 3px; background: #888; }
.s6 { left: 33px; top: 174px; width: 1px; height: 15px; }
.s7 { left: 627px; top: 56px; width: 5px; height: 6px; background: #cccec4; }
.s8 { left: 573px; top: 150px; width: 2px; height: 5px; background: #111; }
.filters { height: 37px; display: grid; grid-template-columns: 60px 151px 37px 35px 87px 87px 27px 35px 87px 54px 64px 134px; padding-left: 14px; align-items: start; }
.filters > b { margin-top: 11px; }
.filters > .branch { margin-top: 18px; letter-spacing: -0.4px; }
.filters > .village { letter-spacing: -0.3px; }
.filters > .from { letter-spacing: -0.6px; }
.filters > .to { font-size: 18px; margin-top: 12px; letter-spacing: -0.4px; }
.filters > .center { margin-top: 5px; }
.dlabel { font-size: 13px; line-height: 18px; color: #9b9b98; margin-top: 11px; letter-spacing: 0.3px; }
.dlabel.hi { margin-top: 7px; }
.dinput { width: 83px; height: 30px; margin-top: 5px; border: 1px solid #999; border-right: 2px solid #c8c8c0; border-bottom: 2px solid #c8c8c0; padding: 0 4px 0 3px; display: flex; align-items: center; justify-content: space-between; font-size: 13.5px; color: #333; letter-spacing: 0.6px; }
.dinput.hi { margin-top: 1px; }
.sel { width: 42px; height: 19px; margin-top: 10px; border: 1px solid #777; border-radius: 1px; padding: 0 4px; display: flex; align-items: center; justify-content: space-between; font-size: 13px; color: #444; }
.sel.hi { margin-top: 6px; }
.filters > .drop { margin-top: 0; width: 134px; height: 34px; border: 5px solid #000; background: #fff; padding: 5px 0 0 9px; letter-spacing: -0.35px; }
.drop span { font-weight: 400; }
.getrow { height: 77px; display: flex; }
.getrow h3 { width: 582px; margin: 28px 0 0 49px; }
.btn { background: #cccec4; color: #000; font-weight: 900; font-size: 12.5px; letter-spacing: 0.4px; text-align: center; }
.get { width: 239px; height: 38px; line-height: 38px; padding-right: 7px; }
.thead { margin-left: 29px; height: 36px; display: grid; grid-template-columns: 95px 101px 76px 50px 54px 51px 58px 60px 74px 52px 54px 37px 66px 90px; }
/* the top and bottom rules are interrupted where the sheet was painted over */
.thead::before, .thead::after { content: ""; position: absolute; left: 0; height: 1px; }
.thead::before { top: 0; width: 914px; background: linear-gradient(90deg, #eeefe5 444px, transparent 444px 469px, #eeefe5 469px); }
.thead::after { top: 35px; width: 732px; background: linear-gradient(90deg, #ddded5 444px, transparent 444px 469px, #e2e3d6 469px); }
.cell { border-right: 1px solid #e7e7df; height: 35px; line-height: 36px; padding-right: 1px; text-align: center; font-weight: 700; font-size: 11px; color: #111; letter-spacing: 0.1px; white-space: nowrap; }
.cell.serif { font: 700 16px/37px "Liberation Serif", serif; letter-spacing: -0.1px; padding: 0 8px 0 1px; text-align: left; }
.cell.short, .cell.snf, .cell.clr { height: 30px; padding-right: 0; }
.cell.short { line-height: 34px; }
.cell.snf { border-right-color: #f1f1ea; }
.plain { padding-top: 4px; }
.plain:nth-child(9) { letter-spacing: 0; }
.plain.low { padding-top: 5px; letter-spacing: -0.4px; }
.plain.high { padding-top: 2px; }
.submit { width: 137px; height: 34px; line-height: 35px; margin: 37px 0 0 503px; }

/* fragments of other windows at the right edge */
.behind { background: #fff; z-index: 1; overflow: hidden; }
.wtop { height: 31px; background: #f2f2f2; border-bottom: 1px solid #ccc; display: flex; gap: 35px; padding: 9px 0 0 9px; }
.wtools { height: 35px; background: #f2f2f2; display: flex; align-items: center; gap: 27px; padding: 0 0 3px 6px; }
.gray { height: 6px; background: #8c8c8c; }
.dark1 { height: 29px; background: #231f2d; display: flex; gap: 28px; padding: 8px 0 0 25px; }
.dark2 { height: 58px; background: #332e3d; border-bottom: 1px solid #1576b5; display: flex; padding-top: 5px; }
.pill0 { width: 6px; height: 20px; border-radius: 0 10px 10px 0; background: #231f2d; }
.incog { margin-left: 8px; width: 76px; height: 21px; border-radius: 11px; background: #231f2d; color: #fff; display: flex; align-items: center; gap: 6px; font: 11px Roboto, sans-serif; letter-spacing: -0.2px; }
.second { height: 386px; margin-left: 8px; background: #fffff8; }
.b1 { height: 57px; background: #18acf7; border-bottom: 2px solid #1b93dc; }
.b2 { height: 63px; }
.b3 { height: 7px; background: linear-gradient(#b9bbb0, #fffff8); }
.footer { grid-column: 1 / 3; background: #22261d; }
.vscroll { margin: 0 0 0 1px; width: 16px; background: #f0f0f0; display: flex; flex-direction: column; align-items: center; padding: 6px 0 5px; }
.vscroll i { width: 15px; height: 388px; margin-top: 5px; background: #cdcdcd; }
.vscroll .end { margin-top: auto; }
.hscroll { height: 17px; flex: none; background: #f0f0f0; border-top: 1px solid #fff; display: flex; align-items: center; padding-left: 5px; }
.hscroll i { width: 1202px; height: 15px; margin-left: 6px; background: #cdcdcd; }
.hscroll .end { margin-left: auto; margin-right: 22px; }

/* status bar */
.status { height: 26px; flex: none; background: #f0f0f0; border-top: 1px solid #d4d4d4; display: flex; align-items: center; color: #111; }
.st { height: 23px; border-right: 1px solid #d5d5d5; display: flex; align-items: center; gap: 5px; padding-left: 6px; width: 156px; letter-spacing: -0.6px; word-spacing: 0.5px; }
.st.a { padding-left: 4px; gap: 7px; }
.st.c { width: 458px; }
.zoom { display: flex; align-items: center; padding-left: 21px; letter-spacing: -0.5px; }
.zoom span { width: 35px; }
.track { width: 85px; height: 4px; margin: 0 11px 0 10px; border: 1px solid #ccc; background: #e7e7e7; display: flex; align-items: center; padding-left: 37px; }

/* taskbar */
.taskbar { height: 40px; flex: none; background: #1f1f1f; display: flex; align-items: center; color: #fff; }
.start { width: 48px; display: grid; place-items: center; }
.search { width: 344px; height: 40px; background: #f2f2f2; border: 1px solid #bbb; display: flex; align-items: center; gap: 10px; padding-left: 12px; color: #333; font-size: 14.5px; letter-spacing: -0.3px; }
.task { position: relative; width: 48px; height: 40px; display: grid; place-items: center; flex: none; }
.view-task { margin-right: 2px; }
.run::after { content: ""; position: absolute; left: 5px; right: 4px; bottom: 0; height: 2px; background: #76b9ed; }
.multi::after { background: linear-gradient(90deg, #76b9ed 30px, #52799a 30px); }
.active { background: linear-gradient(#484848, #484848) no-repeat 1px 0 / 46px 40px; }
.active::after { left: 1px; right: 1px; }
.badge { position: absolute; left: 22px; top: 18px; width: 16px; height: 16px; border-radius: 50%; background: #f01419; line-height: 16px; text-align: center; }
.tray { width: 86px; margin-left: 7px; display: flex; align-items: center; gap: 7px; flex: none; }
.tray svg:first-child { margin-right: 4px; }
.clock { width: 72px; text-align: center; line-height: 18px; font-size: 11.5px; letter-spacing: -0.35px; white-space: nowrap; flex: none; }
.notif { margin-left: 8px; }
.desk { width: 1px; height: 40px; margin-left: 20px; background: #666; }
```
